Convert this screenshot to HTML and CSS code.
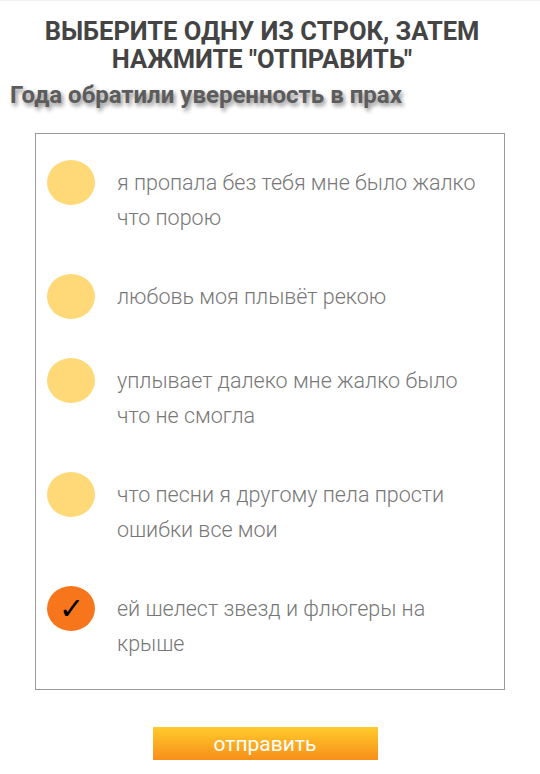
FILE: index.html
```html
<!DOCTYPE html>
<html lang="ru">
<head>
    <meta charset="utf-8">
    <title>Выберите строку</title>
    <link rel="stylesheet" href="styles.css">
</head>
<body>
    <div class="page">
        <h1 class="title">ВЫБЕРИТЕ ОДНУ ИЗ СТРОК, ЗАТЕМ НАЖМИТЕ "ОТПРАВИТЬ"</h1>
        <h2 class="question">Года обратили уверенность в прах</h2>

        <form class="choices">
            <!-- варианты ответа -->
            <label class="choice">
                <span class="mark"></span>
                <span class="text">я пропала без тебя мне было жалко что порою</span>
            </label>
            <label class="choice">
                <span class="mark"></span>
                <span class="text">любовь моя плывёт рекою</span>
            </label>
            <label class="choice">
                <span class="mark"></span>
                <span class="text">уплывает далеко мне жалко было что не смогла</span>
            </label>
            <label class="choice">
                <span class="mark"></span>
                <span class="text">что песни я другому пела прости ошибки все мои</span>
            </label>
            <label class="choice">
                <span class="mark checked">&#10003;</span>
                <span class="text">ей шелест звезд и флюгеры на крыше</span>
            </label>
        </form>

        <div class="actions">
            <button type="button" class="send">отправить</button>
        </div>
    </div>
</body>
</html>
```

FILE: styles.css
```css
body {
    margin: 0;
    padding: 0;
    font-family: Roboto, "Liberation Sans", sans-serif;
    background: #fff;
}

.page {
    width: 540px;
    border-top: 1px solid #f0f0f0;
}

.title {
    margin: 16px 0 0;
    text-align: center;
    font-size: 25.5px;
    line-height: 28px;
    font-weight: 700;
    color: #444;
    padding: 0 40px 0 24px;
}

.question {
    margin: 8px 0 0 10px;
    font-size: 24px;
    line-height: 28px;
    font-weight: 700;
    color: #5c5c5c;
    text-shadow: 2px 3px 4px rgba(0, 0, 0, 0.45);
}

.choices {
    margin: 24px 35px 0 35px;
    border: 1px solid #999;
    padding: 9px 18px 6px 11px;
}

.choice {
    display: flex;
    align-items: flex-start;
    padding: 22px 0;
}

.mark {
    flex: 0 0 48px;
    height: 45px;
    margin-top: -5px;
    border-radius: 50%;
    background: #ffd878;
    color: #000;
    font-size: 30px;
    line-height: 45px;
    text-align: center;
}

.mark.checked {
    background: #f7761b;
}

.text {
    margin-left: 22px;
    font-size: 21.5px;
    line-height: 35px;
    font-weight: 300;
    color: #777;
}

.actions {
    margin-top: 37px;
    text-align: center;
    padding-right: 10px;
}

.send {
    width: 225px;
    height: 33px;
    border: none;
    background: linear-gradient(#ffcb2b, #f88f1a);
    color: #fff;
    font-family: Roboto, "Liberation Sans", sans-serif;
    font-size: 21px;
    padding: 0;
}
```
